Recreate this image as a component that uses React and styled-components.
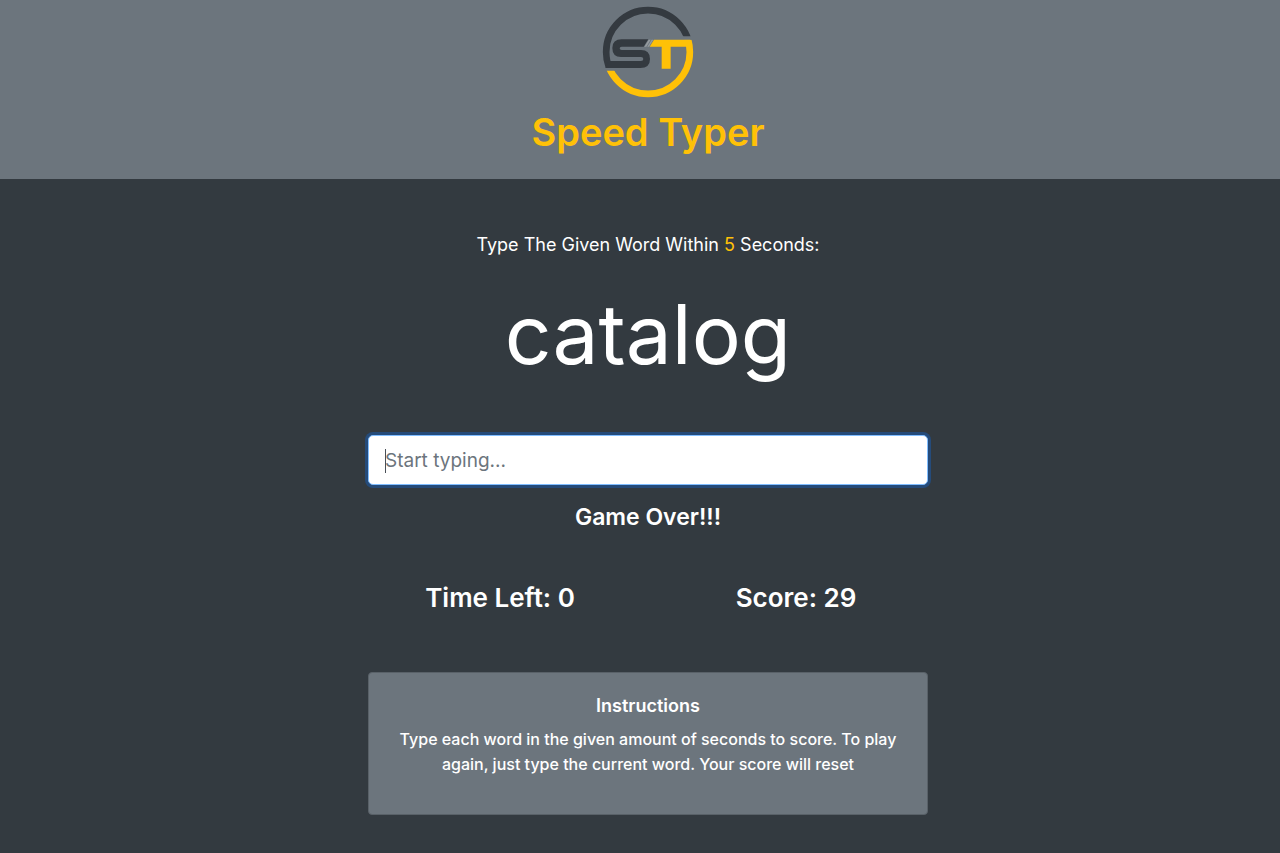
import React, { useState } from 'react';
import styled, { createGlobalStyle } from 'styled-components';

const GlobalStyle = createGlobalStyle`
  *, *::before, *::after { box-sizing: border-box; }
  body {
    margin: 0;
    background: #333a40;
    color: #fff;
    font-family: Inter, "Liberation Sans", Arial, sans-serif;
    font-size: 16px;
    line-height: 24px;
  }
  h1, h2, h3, h4, h5, p { margin: 0; }
`;

const Header = styled.header`
  display: flex;
  flex-direction: column;
  align-items: center;
  gap: 8px;
  padding: 4px 0 23px 16px;
  background: #6c757d;
  color: #ffc107;
`;

const Logo = styled.svg`
  display: block;
  width: 96px;
  height: 96px;
`;

const Brand = styled.h1`
  font-size: 38px;
  line-height: 48px;
  font-weight: 600;
`;

const Main = styled.main`
  display: flex;
  justify-content: center;
  padding: 52px 16px 38px 32px;
  text-align: center;
`;

const Game = styled.section`
  width: 100%;
  max-width: 560px;
`;

const Prompt = styled.p`
  font-size: 18px;
  line-height: 28px;
`;

const Accent = styled.span`
  color: #ffc107;
`;

const Word = styled.h2`
  margin-top: 24px;
  font-size: 82px;
  line-height: 104px;
  font-weight: 400;
`;

const Field = styled.div`
  position: relative;
  margin-top: 48px;
`;

const Caret = styled.span`
  position: absolute;
  top: 14px;
  left: 17px;
  width: 1px;
  height: 24px;
  background: #495057;
  visibility: hidden;
  pointer-events: none;
`;

const WordInput = styled.input`
  display: block;
  width: 100%;
  height: 50px;
  padding: 8px 16px;
  border: 1px solid #80bdff;
  border-radius: 5px;
  outline: none;
  background: #fff;
  box-shadow: 0 0 0 3px #254b7a;
  color: #495057;
  font: inherit;
  font-size: 19px;
  &::placeholder { color: #6c757d; opacity: 1; }
  &:placeholder-shown { caret-color: transparent; }
  &:placeholder-shown + ${Caret} { visibility: visible; }
`;

const Message = styled.h4`
  margin-top: 16px;
  font-size: 23px;
  line-height: 32px;
  font-weight: 600;
`;

const Stats = styled.div`
  display: grid;
  grid-template-columns: 1fr 1fr;
  gap: 32px;
  margin-top: 48px;
`;

const Stat = styled.h3`
  font-size: 26px;
  line-height: 34px;
  font-weight: 600;
`;

const Card = styled.section`
  margin-top: 57px;
  padding: 20px 24px 37px;
  border: 1px solid #596168;
  border-radius: 4px;
  background: #6c757d;
`;

const CardTitle = styled.h5`
  margin-bottom: 8px;
  font-size: 18px;
  line-height: 26px;
  font-weight: 600;
`;

const CardText = styled.p`
  font-size: 16px;
  line-height: 25px;
  font-weight: 500;
`;

function SpeedLogo() {
  return (
    <Logo viewBox="29 13 288 288" role="img" aria-label="Speed Typer logo">
      <defs>
        <clipPath id="ring-dark">
          <path d="M0 0 H348 V110 H173 V205 H0 Z" />
        </clipPath>
        <clipPath id="ring-gold">
          <path d="M348 120 V318 H0 V213 H173 V120 Z" />
        </clipPath>
      </defs>
      <circle cx="173" cy="157" r="125.5" fill="none" stroke="#343a40" strokeWidth="20" clipPath="url(#ring-dark)" />
      <circle cx="173" cy="157" r="125.5" fill="none" stroke="#ffc107" strokeWidth="20" clipPath="url(#ring-gold)" />
      <path d="M174 119 H94 Q66 119 66 145 Q66 172 92 172 H152 Q159 172 159 178 Q159 184 152 184 H54 L46 205 H150 Q179 205 179 178 Q179 151 152 151 H94 Q88 151 88 146 Q88 141 94 141 H160 Z" fill="#343a40" />
      <path d="M175 120 H181 L168 141 H162 Z M184 120 H189 L176 141 H171 Z" fill="#959b9f" />
      <path d="M191 120 H300 V141 H241 V207 H214 V141 H178 Z" fill="#ffc107" />
    </Logo>
  );
}

export default function App() {
  const [value, setValue] = useState('');
  return (
    <>
      <GlobalStyle />
      <Header>
        <SpeedLogo />
        <Brand>Speed Typer</Brand>
      </Header>
      <Main>
        <Game>
          <Prompt>
            Type The Given Word Within <Accent>5</Accent> Seconds:
          </Prompt>
          <Word>catalog</Word>
          <Field>
            <WordInput
              type="text"
              aria-label="Type the word"
              placeholder="Start typing..."
              value={value}
              onChange={(e) => setValue(e.target.value)}
              autoFocus
            />
            <Caret />
          </Field>
          <Message>Game Over!!!</Message>
          <Stats>
            <Stat>Time Left: 0</Stat>
            <Stat>Score: 29</Stat>
          </Stats>
          <Card>
            <CardTitle>Instructions</CardTitle>
            <CardText>
              Type each word in the given amount of seconds to score. To play again, just type the
              current word. Your score will reset
            </CardText>
          </Card>
        </Game>
      </Main>
    </>
  );
}
